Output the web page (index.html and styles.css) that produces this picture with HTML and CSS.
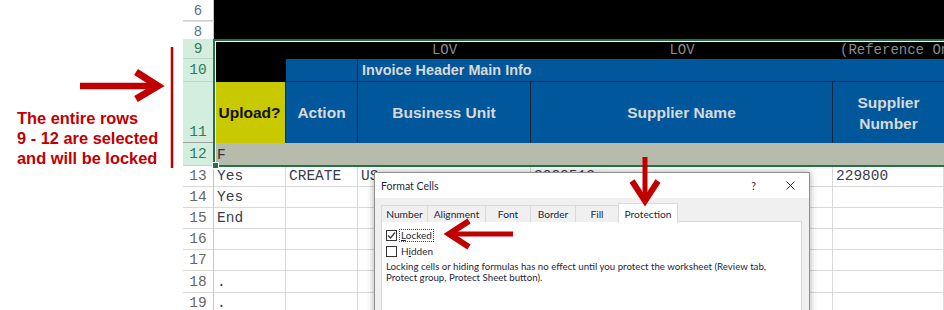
FILE: index.html
```html
<!DOCTYPE html>
<html lang="en">
<head>
<meta charset="utf-8">
<title>Locked rows</title>
<link rel="stylesheet" href="styles.css">
</head>
<body>
<div class="page">
  <div class="annot">
    <p class="note">The entire rows<br>9 - 12 are selected<br>and will be locked</p>
  </div>

  <div class="sheet">
    <div class="top">
      <div class="rh rh-top r6">6</div>
      <div class="rh-sep"></div>
      <div class="rh rh-top r8">8</div>
      <div class="band"></div>
    </div>

    <div class="selgroup">
      <div class="row h20">
        <div class="rh sel">9</div>
        <div class="c blk"></div>
        <div class="c blk"></div>
        <div class="c blk lov">LOV</div>
        <div class="c blk lov">LOV</div>
        <div class="c blk lov ref">(Reference Only)</div>
      </div>
      <div class="row h23">
        <div class="rh sel">10</div>
        <div class="c blk"></div>
        <div class="c hdr hdr-a"></div>
        <div class="c hdr grp">Invoice Header Main Info</div>
      </div>
      <div class="row h61">
        <div class="rh sel low">11</div>
        <div class="c upl">Upload?</div>
        <div class="c hdr col">Action</div>
        <div class="c hdr col">Business Unit</div>
        <div class="c hdr col">Supplier Name</div>
        <div class="c hdr col last">Supplier<br>Number</div>
      </div>
      <div class="row h23">
        <div class="rh sel">12</div>
        <div class="c band12">F</div>
      </div>
    </div>

    <div class="row h21">
      <div class="rh">13</div>
      <div class="c">Yes</div>
      <div class="c">CREATE</div>
      <div class="c">US</div>
      <div class="c">3000513</div>
      <div class="c">229800</div>
    </div>
    <div class="row h21">
      <div class="rh">14</div>
      <div class="c">Yes</div><div class="c"></div><div class="c"></div><div class="c"></div><div class="c"></div>
    </div>
    <div class="row h21">
      <div class="rh">15</div>
      <div class="c">End</div><div class="c"></div><div class="c"></div><div class="c"></div><div class="c"></div>
    </div>
    <div class="row h21">
      <div class="rh">16</div>
      <div class="c"></div><div class="c"></div><div class="c"></div><div class="c"></div><div class="c"></div>
    </div>
    <div class="row h21">
      <div class="rh">17</div>
      <div class="c"></div><div class="c"></div><div class="c"></div><div class="c"></div><div class="c"></div>
    </div>
    <div class="row h22">
      <div class="rh">18</div>
      <div class="c">.</div><div class="c"></div><div class="c"></div><div class="c"></div><div class="c"></div>
    </div>
    <div class="row h21">
      <div class="rh">19</div>
      <div class="c">.</div><div class="c"></div><div class="c"></div><div class="c"></div><div class="c"></div>
    </div>
  </div>

  <div class="dialog">
    <div class="dlg-title">
      <span class="dlg-name">Format Cells</span>
      <span class="dlg-help">?</span>
      <svg class="dlg-close" width="9" height="9" viewBox="0 0 9 9"><path d="M0.5 0.5L8.5 8.5M8.5 0.5L0.5 8.5"/></svg>
    </div>
    <div class="dlg-body">
      <div class="tabs">
        <span class="tab t-num">Number</span>
        <span class="tab t-align">Alignment</span>
        <span class="tab t-font">Font</span>
        <span class="tab t-border">Border</span>
        <span class="tab t-fill">Fill</span>
        <span class="tab t-prot on">Protection</span>
      </div>
      <div class="panel">
        <div class="chk">
          <span class="box"><svg width="9" height="9" viewBox="0 0 9 9"><path d="M1 4.5L3.5 7L8 1.5"/></svg></span>
          <span class="lbl focus"><u>L</u>ocked</span>
        </div>
        <div class="chk">
          <span class="box"></span>
          <span class="lbl">H<u>i</u>dden</span>
        </div>
        <p class="desc">Locking cells or hiding formulas has no effect until you protect the worksheet (Review tab,<br>Protect group, Protect Sheet button).</p>
      </div>
    </div>
  </div>

  <svg class="marks" width="944" height="310" viewBox="0 0 944 310">
    <g fill="none" stroke="#c00000" stroke-linejoin="miter">
      <path d="M80 86H156" stroke-width="6.5"/>
      <path d="M136 72L158 86L136 99" stroke-width="7"/>
      <path d="M172 47V168" stroke-width="2.5"/>
      <path d="M645 157V200" stroke-width="5"/>
      <path d="M632 181L645 201L658 181" stroke-width="6"/>
      <path d="M513 234H452" stroke-width="5"/>
      <path d="M469 221L449 234L469 247" stroke-width="6"/>
    </g>
  </svg>
</div>
</body>
</html>
```

FILE: styles.css
```css
* {
  box-sizing: border-box;
  margin: 0;
  padding: 0;
}

body {
  margin: 0;
  width: 944px;
  height: 310px;
  overflow: hidden;
  background: #ffffff;
}

.page {
  position: relative;
  display: grid;
  grid-template-columns: 183px 761px;
  height: 310px;
  overflow: hidden;
}

/* annotation on the left */
.annot {
  padding: 108px 0 0 17px;
}

.note {
  font: bold 16.4px/20px "Liberation Sans", Arial, sans-serif;
  color: #c00000;
  white-space: nowrap;
}

/* spreadsheet */
.sheet {
  display: flex;
  flex-direction: column;
}

.top {
  display: grid;
  grid-template-columns: 31px 730px;
  grid-template-rows: 20px 2px 17px;
}

.band {
  grid-column: 2;
  grid-row: 1 / 4;
  background: #000000;
}

.rh {
  display: flex;
  align-items: center;
  justify-content: center;
  padding-top: 1px;
  background: #ffffff;
  border-right: 1px solid #c6c6c6;
  border-bottom: 1px solid #dadada;
  font: 14.5px/1 "Liberation Mono", "Courier New", monospace;
  color: #676767;
}

.rh-top {
  grid-column: 1;
  padding-top: 0;
  border-bottom: none;
  font: 14px/1 "Liberation Sans", Arial, sans-serif;
  color: #5b7193;
}

.r6 { grid-row: 1; }
.r8 { grid-row: 3; }

.rh-sep {
  grid-column: 1;
  grid-row: 2;
  border-top: 1px solid #cfcfcf;
  border-bottom: 1px solid #e2e2e2;
  border-right: 1px solid #c6c6c6;
}

.rh.sel {
  background: #d3eedf;
  color: #2f7c55;
  border-bottom-color: #bfd6c9;
  border-right-color: #9bcfb2;
}

.rh.low {
  align-items: flex-end;
  padding-bottom: 3px;
  border-bottom-color: #9aa59f;
}

.selgroup {
  position: relative;
}

.selgroup::after {
  content: "";
  position: absolute;
  left: 30px;
  top: 0;
  right: -2px;
  bottom: -1px;
  border: 2px solid #217346;
  box-shadow: inset 1px 1px 0 #ffffff;
}

.selgroup::before {
  content: "";
  position: absolute;
  left: 29px;
  bottom: -3px;
  width: 5px;
  height: 5px;
  background: #217346;
  border: 1px solid #ffffff;
  z-index: 2;
}

.row {
  display: grid;
  grid-template-columns: 31px 72px 72px 173px 302px 111px;
}

.h20 { height: 20px; }
.h21 { height: 21px; }
.h22 { height: 22px; }
.h23 { height: 23px; }
.h61 { height: 61px; }

.c {
  display: flex;
  align-items: center;
  padding: 1px 0 0 3px;
  border-right: 1px solid #d9d9d9;
  border-bottom: 1px solid #d9d9d9;
  font: 14.5px/1 "Liberation Mono", "Courier New", monospace;
  color: #3b3b4d;
  white-space: nowrap;
  overflow: hidden;
}

.blk {
  background: #000000;
  border: none;
}

.lov {
  justify-content: center;
  padding-left: 0;
  color: #8c8c8c;
  font-size: 14px;
}

.lov.ref {
  justify-content: flex-start;
  padding-left: 7px;
}

.hdr {
  background: #00579b;
  border-right: 1px solid #14263a;
  border-bottom: 1px solid #14263a;
  padding-top: 0;
  font: bold 15.5px/21px "Liberation Sans", Arial, sans-serif;
  color: #d9d9d9;
}

.hdr-a {
  border-bottom: 1px solid #14263a;
}

.grp {
  grid-column: span 3;
  border-right: none;
  font-size: 14.4px;
  padding-left: 4px;
}

.col {
  justify-content: center;
  text-align: center;
  padding-left: 0;
  border-bottom: none;
}

.col.last {
  border-right: none;
}

.upl {
  justify-content: center;
  padding: 0;
  background: #c9c900;
  border-right: 1px solid #14263a;
  border-bottom: none;
  font: bold 15.5px/1 "Liberation Sans", Arial, sans-serif;
  color: #111111;
}

.band12 {
  grid-column: span 5;
  background: #b7bbab;
  border: none;
  color: #333333;
}

/* dialog */
.dialog {
  position: absolute;
  left: 374px;
  top: 172px;
  width: 436px;
  height: 160px;
  background: #f0f0f0;
  border: 1px solid #8f8f8f;
  box-shadow: 0 0 7px rgba(0, 0, 0, 0.35);
  font-family: Lato, "Noto Sans", sans-serif;
  color: #1f1f3a;
  z-index: 5;
}

.dlg-title {
  height: 25px;
  background: #ffffff;
  display: flex;
  align-items: center;
  padding-left: 6px;
}

.dlg-name {
  font-size: 10.5px;
  flex: 1;
}

.dlg-help {
  font-size: 10.5px;
  margin-right: 30px;
}

.dlg-close {
  margin-right: 14px;
}

.dlg-close path {
  stroke: #333333;
  stroke-width: 1;
  fill: none;
}

.dlg-body {
  padding: 7px 7px 0 6px;
}

.tabs {
  display: flex;
  height: 17px;
  position: relative;
  z-index: 1;
}

.tab {
  display: flex;
  align-items: center;
  justify-content: center;
  height: 17px;
  border: 1px solid #d9d9d9;
  border-bottom: none;
  margin-right: -1px;
  background: #f0f0f0;
  font-size: 10.2px;
  color: #1f1f3a;
}

.t-num { width: 47px; }
.t-align { width: 59px; }
.t-font { width: 46px; }
.t-border { width: 46px; }
.t-fill { width: 44px; }
.t-prot { width: 60px; }

.tab.on {
  background: #ffffff;
  height: 20px;
  margin-top: -2px;
}

.panel {
  background: #ffffff;
  border: 1px solid #d9d9d9;
  margin-top: -1px;
  height: 110px;
  padding: 8px 0 0 4px;
}

.chk {
  display: flex;
  align-items: center;
  height: 11px;
  margin-bottom: 4.5px;
  font-size: 10px;
}

.box {
  width: 11px;
  height: 11px;
  border: 1px solid #333333;
  background: #ffffff;
  display: flex;
  align-items: center;
  justify-content: center;
  margin-right: 3px;
}

.box path {
  fill: none;
  stroke: #333333;
  stroke-width: 1.2;
}

.lbl {
  padding: 0 1px;
  line-height: 11px;
}

.lbl u {
  text-decoration-thickness: 1px;
  text-underline-offset: 1px;
}

.focus {
  outline: 1px dotted #444444;
}

.desc {
  margin-top: 2px;
  font-size: 9.7px;
  line-height: 11px;
  white-space: nowrap;
}

/* annotation arrows */
.marks {
  position: absolute;
  left: 0;
  top: 0;
  z-index: 10;
  pointer-events: none;
}
```
